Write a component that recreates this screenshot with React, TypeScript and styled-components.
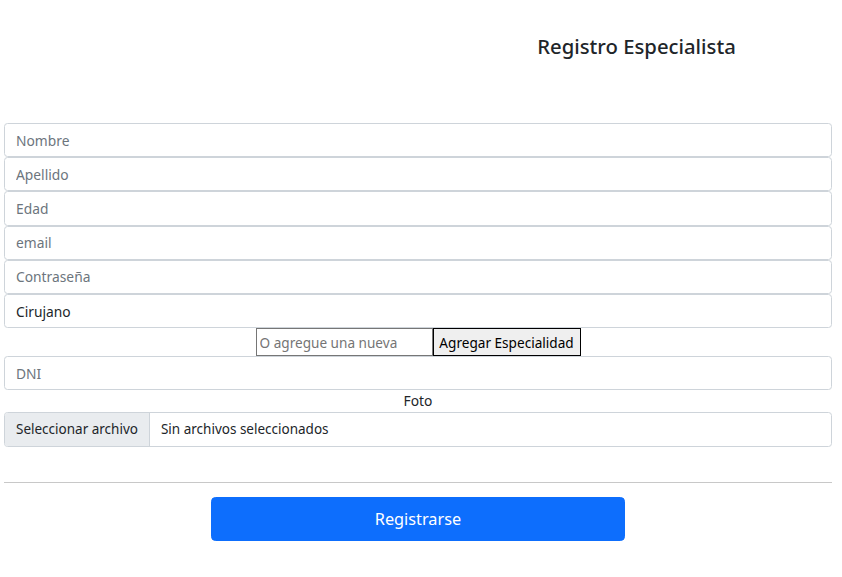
import React from "react";
import styled, { createGlobalStyle } from "styled-components";

const Global = createGlobalStyle`
  html, body { margin: 0; padding: 0; background: #fff; }
  body { font-family: "Noto Sans", "Open Sans", sans-serif; color: #212529; }
  * { box-sizing: border-box; }
`;

const Page = styled.div`
  width: 842px;
  padding: 0 10px 0 4px;
`;

const Header = styled.div`
  display: grid;
  grid-template-columns: 1fr 1fr;
  height: 123px;
  padding-top: 30px;
`;

const Title = styled.h2`
  grid-column: 2;
  margin: 0;
  text-align: center;
  padding-left: 23px;
  font-size: 20.3px;
  font-weight: 500;
  line-height: 32px;
  color: #212529;
`;

const Form = styled.form`
  display: flex;
  flex-direction: column;
`;

const Field = styled.input`
  display: block;
  width: 100%;
  height: 34.2px;
  padding: 0 11px;
  font-family: inherit;
  font-size: 13.8px;
  color: #212529;
  background: #fff;
  border: 1px solid #ced4da;
  border-radius: 3.5px;
  outline: none;
  &::placeholder { color: #6c757d; }
`;

const AddRow = styled.div`
  display: flex;
  justify-content: center;
  height: 28px;
`;

const SmallInput = styled.input`
  width: 177px;
  height: 28px;
  padding: 0 3px;
  font-family: inherit;
  font-size: 13.6px;
  border: 1px solid #767676;
  border-radius: 0;
  outline: none;
  &::placeholder { color: #757575; }
`;

const SmallButton = styled.button`
  width: 148px;
  height: 28px;
  padding: 0;
  font-family: inherit;
  font-size: 13.6px;
  color: #000;
  background: #efefef;
  border: 1px solid #000;
  border-radius: 0;
`;

const Label = styled.div`
  text-align: center;
  font-size: 13.8px;
  line-height: 22px;
`;

const FileBox = styled.div`
  display: flex;
  align-items: stretch;
  height: 34.2px;
  border: 1px solid #ced4da;
  border-radius: 3.5px;
  overflow: hidden;
  font-size: 13.5px;
`;

const FileButton = styled.span`
  display: flex;
  align-items: center;
  padding: 0 11px;
  background: #e9ecef;
  border-right: 1px solid #ced4da;
  color: #212529;
`;

const FileText = styled.span`
  display: flex;
  align-items: center;
  padding: 0 11px;
  color: #212529;
`;

const Rule = styled.hr`
  margin: 35px 0 14px;
  border: 0;
  border-top: 1px solid #c8c8c8;
`;

const Footer = styled.div`
  display: flex;
  justify-content: center;
`;

const Submit = styled.button`
  width: 414px;
  height: 44px;
  font-family: inherit;
  font-size: 16.3px;
  color: #fff;
  background: #0d6efd;
  border: 1px solid #0d6efd;
  border-radius: 4.5px;
`;

export default function App() {
  return (
    <>
      <Global />
      <Page>
        <Header>
          <Title>Registro Especialista</Title>
        </Header>
        <Form onSubmit={(e) => e.preventDefault()}>
          <Field placeholder="Nombre" />
          <Field placeholder="Apellido" />
          <Field placeholder="Edad" />
          <Field placeholder="email" />
          <Field placeholder="Contraseña" />
          <Field defaultValue="Cirujano" />
          <AddRow>
            <SmallInput placeholder="O agregue una nueva" />
            <SmallButton type="button">Agregar Especialidad</SmallButton>
          </AddRow>
          <Field placeholder="DNI" />
          <Label>Foto</Label>
          <FileBox>
            <FileButton>Seleccionar archivo</FileButton>
            <FileText>Sin archivos seleccionados</FileText>
          </FileBox>
          <Rule />
          <Footer>
            <Submit type="submit">Registrarse</Submit>
          </Footer>
        </Form>
      </Page>
    </>
  );
}
